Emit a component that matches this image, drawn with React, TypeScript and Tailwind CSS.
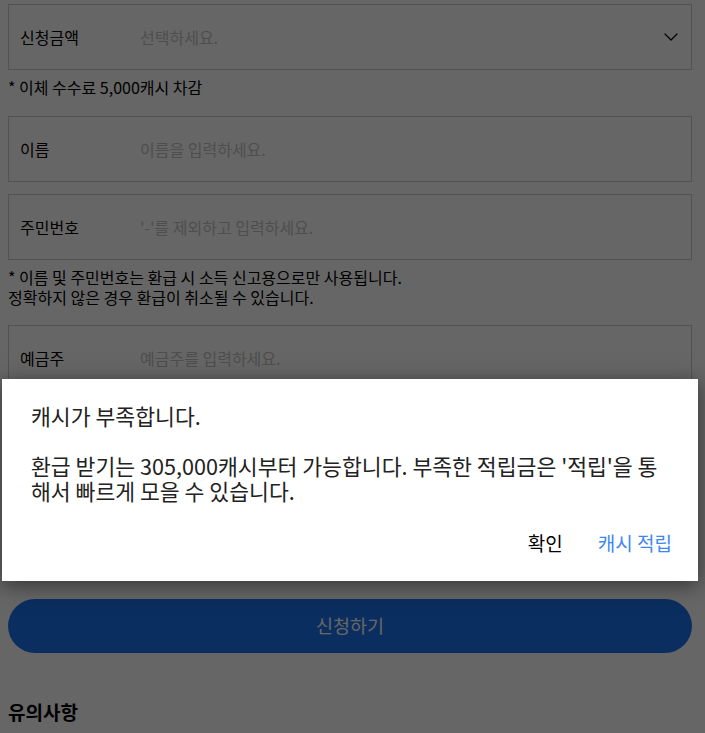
import { ChevronDown } from "lucide-react";

const font = { fontFamily: '"Noto Sans CJK KR", "Noto Sans", Roboto, sans-serif' };

const Field = (props: { label: string; placeholder: string; select?: boolean }) => (
  <div className="flex h-[66px] items-center border border-[#cccccc] pl-[11px] pr-2">
    <span className="w-[120px] shrink-0 text-[16px] text-black">{props.label}</span>
    <span className="flex-1 text-[16px] text-[#c4c4c4]">{props.placeholder}</span>
    {props.select && <ChevronDown className="h-6 w-6 text-black" strokeWidth={1.2} />}
  </div>
);

export default function App() {
  return (
    <div className="relative h-[733px] w-[705px] overflow-hidden bg-white" style={font}>
      {/* form */}
      <div className="flex flex-col pl-2 pr-[13px] pt-1">
        <Field label="신청금액" placeholder="선택하세요." select />
        <p className="mt-[7px] text-[16px] leading-5 text-black">* 이체 수수료 5,000캐시 차감</p>
        <div className="mt-[19px]">
          <Field label="이름" placeholder="이름을 입력하세요." />
        </div>
        <div className="mt-3">
          <Field label="주민번호" placeholder="'-'를 제외하고 입력하세요." />
        </div>
        <div className="mt-[7px] flex flex-col text-[16px] leading-5 text-black">
          <span>* 이름 및 주민번호는 환급 시 소득 신고용으로만 사용됩니다.</span>
          <span>정확하지 않은 경우 환급이 취소될 수 있습니다.</span>
        </div>
        <div className="mt-[18px]">
          <Field label="예금주" placeholder="예금주를 입력하세요." />
        </div>
        <button className="mt-[208px] h-[54px] w-full rounded-full bg-[#1d74ef] text-[18.5px] text-white">
          신청하기
        </button>
        <h2 className="mt-[45px] text-[19px] font-bold text-black">유의사항</h2>
      </div>

      {/* dim */}
      <div className="absolute inset-0 bg-black/60" />

      {/* alert dialog */}
      <div className="absolute left-[2px] top-[379px] h-[202px] w-[696px] bg-white px-[29px] pt-[23px] shadow-[0_4px_20px_rgba(0,0,0,0.5)]">
        <p className="text-[21.6px] leading-[28px] text-[#222]">캐시가 부족합니다.</p>
        <p className="mt-[23px] break-all text-[21.6px] leading-[25px] text-[#222]">
          환급 받기는 305,000캐시부터 가능합니다. 부족한 적립금은 '적립'을 통해서 빠르게 모을 수 있습니다.
        </p>
        <div className="-mr-[3px] mt-[26px] flex justify-end gap-[35px] text-[19px]">
          <span className="text-black">확인</span>
          <span className="text-[#3d87f5]">캐시 적립</span>
        </div>
      </div>
    </div>
  );
}
